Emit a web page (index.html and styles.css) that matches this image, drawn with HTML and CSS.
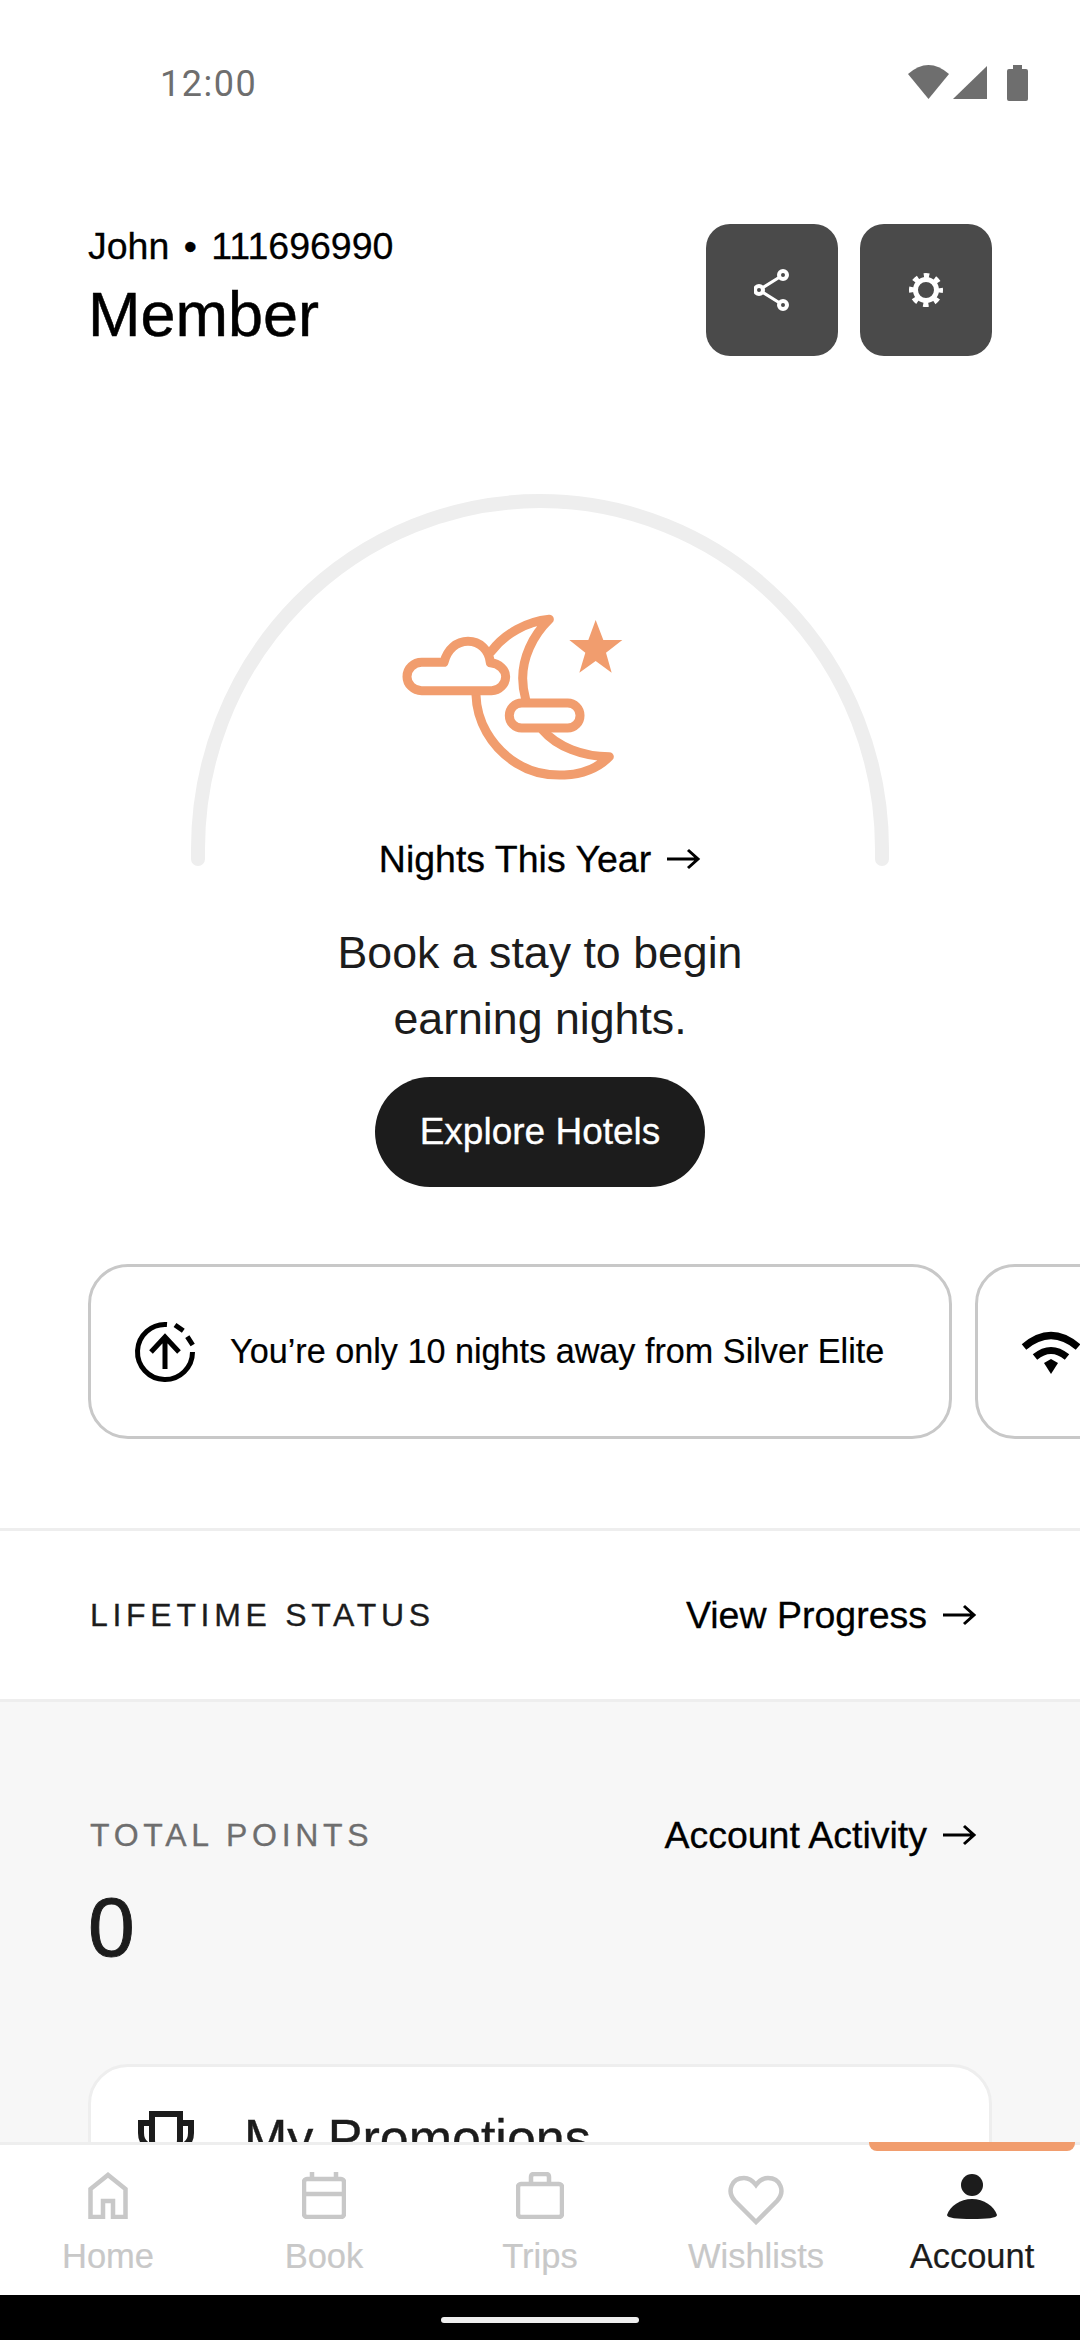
FILE: index.html
```html
<!DOCTYPE html>
<html lang="en">
<head>
<meta charset="utf-8">
<title>Account</title>
<link rel="stylesheet" href="styles.css">
</head>
<body>
<div class="screen">
  <div class="status">
    <span class="clock">12:00</span>
    <div class="status-icons">
      <svg width="41" height="36" viewBox="0 0 41 36"><path d="M0 9 Q20.500 -9 41 9 L20.500 34Z" fill="#6e6e6e"/></svg>
      <svg width="34" height="36" viewBox="0 0 34 36"><path d="M0 34 L34 1 V34Z" fill="#6e6e6e"/></svg>
      <svg class="batt" width="21" height="36" viewBox="0 0 21 36"><path d="M6 0h9v4h4q2 0 2 2v28q0 2-2 2H2q-2 0-2-2V6q0-2 2-2h4z" fill="#6e6e6e"/></svg>
    </div>
  </div>

  <main class="main">
    <header class="head">
      <div class="who">
        <div class="id">John • 111696990</div>
        <div class="tier">Member</div>
      </div>
      <div class="actions">
        <div class="sq">
          <svg width="36" height="44" viewBox="0 0 36 44" fill="none" stroke="#fff"><path stroke-width="3" d="M5 22 29 7M5 22 29 37"/><g stroke-width="4" fill="#4a4a4a"><circle cx="29" cy="7" r="4"/><circle cx="5" cy="22" r="4"/><circle cx="29" cy="37" r="4"/></g></svg>
        </div>
        <div class="sq">
          <svg width="36" height="36" viewBox="0 0 36 36" fill="none" stroke="#fff"><circle cx="18" cy="18" r="10.500" stroke-width="5"/><circle cx="18" cy="18" r="14.500" stroke-width="5" stroke-dasharray="5.400 6" stroke-dashoffset="2.700"/></svg>
        </div>
      </div>
    </header>

    <section class="gauge">
      <svg class="arc" width="700" height="385" viewBox="0 0 700 385" fill="none">
        <path d="M8 369 V359 A342 348 0 0 1 692 359 V369" stroke="#eeeeee" stroke-width="14" stroke-linecap="round"/>
      </svg>
      <svg class="moon" width="320" height="220" viewBox="0 0 960 660" fill="none" stroke="#f19d6e" stroke-width="27" stroke-linejoin="round" stroke-linecap="round">
        <path d="M453 215 C495 160 560 125 628 118 C575 170 548 235 548 295 C548 320 552 340 557 358"/>
        <path d="M408 345 C410 420 450 500 530 550 C610 600 740 600 808 530 C730 530 650 500 608 450"/>
        <path d="M245 332 C220 332 201 312 201 290 C201 265 222 247 245 247 L312 247 C322 208 350 184 384 184 C420 184 447 210 451 248 C478 250 497 270 497 290 C497 312 478 332 455 332Z"/>
        <rect x="508" y="369" width="212" height="75" rx="37"/>
        <path d="M767 120 L790 180 L847 180 L798 218 L815 278 L767 243 L718 278 L736 218 L688 180 L745 180Z" fill="#f19d6e" stroke="none"/>
      </svg>
      <div class="link nights">Nights This Year
        <svg class="arrow" width="36" height="24" viewBox="0 0 36 24" fill="none" stroke="#000" stroke-width="3"><path d="M2 12H33M23 3l10 9-10 9"/></svg>
      </div>
      <p class="prompt">Book a stay to begin<br>earning nights.</p>
      <div class="pill">Explore Hotels</div>
    </section>

    <div class="cards">
      <div class="card">
        <svg width="64" height="64" viewBox="0 0 64 64" fill="none" stroke="#000" stroke-width="5">
          <path d="M34 4.600 A27.500 27.500 0 1 0 59.500 32"/>
          <path d="M42 5 L50.300 10.700M54.300 16.700 L59.700 25"/>
          <path d="M32 49V17M18 32 32 17 46 32"/>
        </svg>
        <span>You’re only 10 nights away from Silver Elite</span>
      </div>
      <div class="card card-next">
        <svg width="60" height="44" viewBox="0 0 60 44" fill="none" stroke="#000" stroke-width="7"><path d="M3 17 Q30 -6 57 17M14 27 Q30 14 46 27"/><path d="M23 33 L30 29 L37 33 L30 44Z" fill="#000" stroke="none"/></svg>
      </div>
    </div>

    <div class="row life">
      <span class="eyebrow">LIFETIME STATUS</span>
      <div class="link">View Progress
        <svg class="arrow" width="36" height="24" viewBox="0 0 36 24" fill="none" stroke="#000" stroke-width="3"><path d="M2 12H33M23 3l10 9-10 9"/></svg>
      </div>
    </div>

    <section class="gray">
      <div class="row pts">
        <span class="eyebrow dim">TOTAL POINTS</span>
        <div class="link">Account Activity
          <svg class="arrow" width="36" height="24" viewBox="0 0 36 24" fill="none" stroke="#000" stroke-width="3"><path d="M2 12H33M23 3l10 9-10 9"/></svg>
        </div>
      </div>
      <div class="zero">0</div>
      <div class="promo">
        <svg width="56" height="60" viewBox="0 0 56 60" fill="none" stroke="#1c1c1c" stroke-width="6"><path d="M14 3H42V28Q42 44 28 44 14 44 14 28Z"/><path d="M14 12H3V22Q3 34 15 36M42 12H53V22Q53 34 41 36"/></svg>
        <span>My Promotions</span>
      </div>
    </section>
  </main>

  <nav class="nav">
    <span class="nav-mark"></span>
    <div class="tab">
      <div class="ico"><svg width="40" height="47" viewBox="0 0 40 47" fill="none" stroke="#c8c8c8" stroke-width="4.500"><path d="M2.500 45 V17 L20 3 L37.500 17 V45 H25 V29 H15 V45Z"/></svg></div>
      <span>Home</span>
    </div>
    <div class="tab">
      <div class="ico"><svg width="44" height="47" viewBox="0 0 44 47" fill="none" stroke="#c8c8c8" stroke-width="4.500"><rect x="2" y="7" width="40" height="38" rx="3"/><path d="M2 22H42M10 0V7M34 0V7"/></svg></div>
      <span>Book</span>
    </div>
    <div class="tab">
      <div class="ico"><svg width="48" height="47" viewBox="0 0 48 47" fill="none" stroke="#c8c8c8" stroke-width="4.500"><rect x="2" y="12" width="44" height="33" rx="3"/><path d="M15 12V5Q15 2 18 2H30Q33 2 33 5V12"/></svg></div>
      <span>Trips</span>
    </div>
    <div class="tab">
      <div class="ico"><svg width="56" height="53" viewBox="0 -3 56 53" fill="none" stroke="#c8c8c8" stroke-width="4.500"><path d="M28 47 L7 26 C-2 16 4 3 16 3 C21 3 25 6 28 10 C31 6 35 3 40 3 C52 3 58 16 49 26Z"/></svg></div>
      <span>Wishlists</span>
    </div>
    <div class="tab on">
      <div class="ico"><svg width="50" height="47" viewBox="0 -2 50 47"><circle cx="25" cy="11" r="11" fill="#1c1c1c"/><path d="M0 41 C3 32 13 25 25 25 C37 25 47 32 50 41 C50 44 40 45 25 45 C10 45 0 44 0 41Z" fill="#1c1c1c"/></svg></div>
      <span>Account</span>
    </div>
  </nav>
  <div class="sysbar"><span class="handle"></span></div>
</div>
</body>
</html>
```

FILE: styles.css
```css
* { box-sizing: border-box; }
html, body { margin: 0; padding: 0; }
body { font-family: "Liberation Sans", Arial, sans-serif; background: #fff; color: #000; }
.screen { width: 1080px; height: 2340px; display: flex; flex-direction: column; overflow: hidden; }

.status { height: 168px; flex: none; display: flex; justify-content: space-between; padding: 62px 52px 0 160px; }
.clock { font-family: Roboto, sans-serif; font-size: 36px; line-height: 44px; color: #6e6e6e; letter-spacing: 1.5px; }
.status-icons { display: flex; gap: 4px; height: 36px; margin-top: 3px; }
.batt { margin-left: 16px; }

.main { flex: 1; min-height: 0; overflow: hidden; display: flex; flex-direction: column; }
.head { display: flex; justify-content: space-between; padding: 56px 88px 0 88px; height: 188px; flex: none; }
.id { font-size: 37.500px; line-height: 40px; margin-top: 2px; word-spacing: 4px; -webkit-text-stroke: .3px #000; }
.tier { font-size: 63px; line-height: 70px; margin-top: 13px; -webkit-text-stroke: .5px #000; }
.actions { display: flex; gap: 22px; }
.sq { width: 132px; height: 132px; border-radius: 24px; background: #4a4a4a; display: flex; align-items: center; justify-content: center; }

.gauge { position: relative; height: 908px; flex: none; display: flex; flex-direction: column; align-items: center; padding-top: 483px; }
.arc { position: absolute; left: 190px; top: 134px; }
.moon { position: absolute; left: 340px; top: 224px; }
.link { display: flex; align-items: center; gap: 14px; font-size: 37.500px; line-height: 40px; color: #000; -webkit-text-stroke: .3px #000; }
.arrow { flex: none; }
.prompt { margin: 41px 0 0; font-size: 44.700px; line-height: 66px; text-align: center; color: #1c1c1c; }
.pill { margin-top: 25px; width: 330px; height: 110px; border-radius: 55px; background: #1c1c1c; color: #fff; font-size: 37px; display: flex; align-items: center; justify-content: center; -webkit-text-stroke: .3px #fff; }

.cards { display: flex; gap: 23px; padding-left: 88px; height: 264px; flex: none; }
.card { flex: none; width: 864px; height: 175px; border: 3px solid #c8c8c8; border-radius: 40px; display: flex; align-items: center; gap: 33px; padding-left: 42px; font-size: 34.200px; -webkit-text-stroke: .2px #000; }
.card-next { width: 200px; padding-left: 43px; }

.row { display: flex; justify-content: space-between; align-items: center; padding: 0 103px 0 90px; }
.life { height: 174px; flex: none; border-top: 3px solid #eee; border-bottom: 3px solid #eee; }
.eyebrow { font-size: 32px; letter-spacing: 4.700px; color: #1c1c1c; -webkit-text-stroke: .3px currentColor; }
.dim { color: #6e6e6e; }

.gray { flex: 1; min-height: 0; background: #f7f7f7; overflow: hidden; }
.pts { margin-top: 113px; }
.zero { font-size: 84px; line-height: 92px; margin: 26px 0 0 88px; color: #1c1c1c; -webkit-text-stroke: 1px #1c1c1c; }
.promo { margin: 91px 88px 0; height: 200px; background: #fff; border: 3px solid #eee; border-radius: 40px; display: flex; align-items: flex-start; gap: 50px; padding: 41px 0 0 47px; font-size: 52px; line-height: 60px; color: #1c1c1c; -webkit-text-stroke: .4px #1c1c1c; }
.promo svg { margin-top: 3px; flex: none; }

.nav { position: relative; flex: none; height: 153px; background: #fff; border-top: 3px solid #eee; display: grid; grid-template-columns: repeat(5, 216px); }
.nav-mark { position: absolute; right: 5px; top: -3px; width: 206px; height: 9px; background: #f19d6e; border-radius: 0 0 8px 8px; }
.tab { display: flex; flex-direction: column; align-items: center; padding-top: 27px; color: #c8c8c8; font-size: 34.500px; }
.ico { height: 56px; display: flex; align-items: flex-start; }
.tab span { line-height: 38px; margin-top: 9px; -webkit-text-stroke: .2px currentColor; }
.tab.on { color: #1c1c1c; }

.sysbar { flex: none; height: 45px; background: #000; display: flex; justify-content: center; padding-top: 22px; }
.handle { width: 198px; height: 6px; border-radius: 3px; background: #eee; }
```
